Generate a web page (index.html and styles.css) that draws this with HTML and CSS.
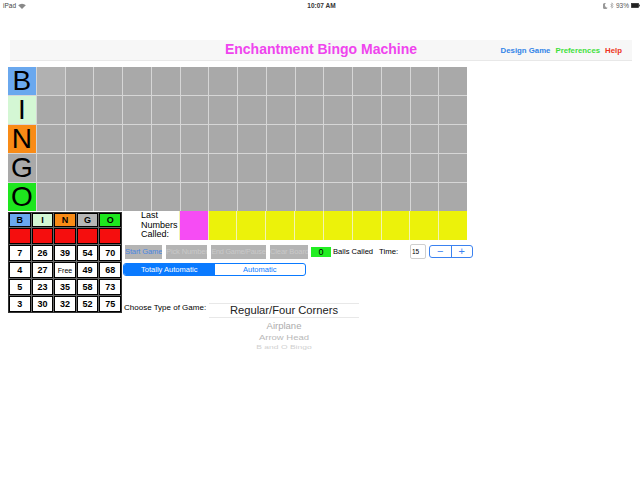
FILE: index.html
```html
<!DOCTYPE html>
<html>
<head>
<meta charset="utf-8">
<link rel="stylesheet" href="styles.css">
</head>
<body>
<div class="status">
  <div class="st-left">iPad
    <svg class="wifi" width="8" height="6" viewBox="0 0 8 6"><path d="M4 6 L0.2 2.2 A5.4 5.4 0 0 1 7.8 2.2 Z" fill="#888"/></svg>
  </div>
  <div class="st-mid">10:07 AM</div>
  <div class="st-right">
    <svg width="5" height="6" viewBox="0 0 5 6"><path d="M3 0.3 A3 3 0 1 0 4.8 4.6 A2.4 2.4 0 0 1 3 0.3 Z" fill="#999"/></svg>
    <svg width="4" height="7" viewBox="0 0 4 7"><path d="M0.5 2 L3.2 4.8 L1.8 6.2 V0.8 L3.2 2.2 L0.5 5" fill="none" stroke="#999" stroke-width="0.6"/></svg>
    <span>93%</span>
    <svg width="9" height="5" viewBox="0 0 9 5"><rect x="0.3" y="0.3" width="7.4" height="4.4" fill="#222" stroke="#222" stroke-width="0.5"/><rect x="7.9" y="1.6" width="0.9" height="1.8" fill="#222"/></svg>
  </div>
</div>

<header class="nav">
  <div></div>
  <h1 class="title">Enchantment Bingo Machine</h1>
  <nav class="links">
    <span class="l-design">Design Game</span>
    <span class="l-prefs">Preferences</span>
    <span class="l-help">Help</span>
  </nav>
</header>

<section class="board">
  <div class="letter lb">B</div>
  <div class="cell hl"></div><div class="cell"></div><div class="cell"></div><div class="cell"></div><div class="cell"></div><div class="cell"></div><div class="cell"></div><div class="cell"></div><div class="cell"></div><div class="cell"></div><div class="cell"></div><div class="cell"></div><div class="cell"></div><div class="cell"></div><div class="cell"></div>
  <div class="letter li">I</div>
  <div class="cell"></div><div class="cell"></div><div class="cell"></div><div class="cell"></div><div class="cell"></div><div class="cell"></div><div class="cell"></div><div class="cell"></div><div class="cell"></div><div class="cell"></div><div class="cell"></div><div class="cell"></div><div class="cell"></div><div class="cell"></div><div class="cell"></div>
  <div class="letter ln">N</div>
  <div class="cell"></div><div class="cell"></div><div class="cell"></div><div class="cell"></div><div class="cell"></div><div class="cell"></div><div class="cell"></div><div class="cell"></div><div class="cell"></div><div class="cell"></div><div class="cell"></div><div class="cell"></div><div class="cell"></div><div class="cell"></div><div class="cell"></div>
  <div class="letter lg">G</div>
  <div class="cell"></div><div class="cell"></div><div class="cell"></div><div class="cell"></div><div class="cell"></div><div class="cell"></div><div class="cell"></div><div class="cell"></div><div class="cell"></div><div class="cell"></div><div class="cell"></div><div class="cell"></div><div class="cell"></div><div class="cell"></div><div class="cell"></div>
  <div class="letter lo">O</div>
  <div class="cell"></div><div class="cell"></div><div class="cell"></div><div class="cell"></div><div class="cell"></div><div class="cell"></div><div class="cell"></div><div class="cell"></div><div class="cell"></div><div class="cell"></div><div class="cell"></div><div class="cell"></div><div class="cell"></div><div class="cell"></div><div class="cell"></div>
</section>

<section class="lower">
  <div class="card">
    <div class="ch cb">B</div><div class="ch ci">I</div><div class="ch cn">N</div><div class="ch cg">G</div><div class="ch co">O</div>
    <div class="cr"></div><div class="cr"></div><div class="cr"></div><div class="cr"></div><div class="cr"></div>
    <div class="num">7</div><div class="num">26</div><div class="num">39</div><div class="num">54</div><div class="num">70</div>
    <div class="num">4</div><div class="num">27</div><div class="num free">Free</div><div class="num">49</div><div class="num">68</div>
    <div class="num">5</div><div class="num">23</div><div class="num">35</div><div class="num">58</div><div class="num">73</div>
    <div class="num">3</div><div class="num">30</div><div class="num">32</div><div class="num">52</div><div class="num">75</div>
  </div>

  <div class="controls">
    <div class="called">
      <div class="called-label">Last<br>Numbers<br>Called:</div>
      <div class="last"></div>
      <div class="prev"></div><div class="prev"></div><div class="prev"></div><div class="prev"></div><div class="prev"></div><div class="prev"></div><div class="prev"></div><div class="prev"></div><div class="prev"></div>
    </div>

    <div class="btnrow">
      <div class="btn b-start active">Start Game</div>
      <div class="btn b-pick">Pick Number</div>
      <div class="btn b-end">End Game/Pause</div>
      <div class="btn b-clear">Clear Board</div>
      <div class="count">0</div>
      <div class="balls">Balls Called</div>
      <div class="time">Time:</div>
      <div class="tinput">15</div>
      <div class="stepper"><span class="minus">−</span><span class="plus">+</span></div>
    </div>

    <div class="seg">
      <div class="seg-item on">Totally Automatic</div>
      <div class="seg-item">Automatic</div>
    </div>

    <div class="choose">
      <div class="choose-label">Choose Type of Game:</div>
      <div class="picker">
        <div class="pk-sel">Regular/Four Corners</div>
        <div class="pk-1">Airplane</div>
        <div class="pk-2">Arrow Head</div>
        <div class="pk-3">B and O Bingo</div>
      </div>
    </div>
  </div>
</section>
</body>
</html>
```

FILE: styles.css
```css
* { box-sizing: border-box; }
html, body { margin: 0; padding: 0; background: #fff; }
body {
  font-family: "Liberation Sans", Arial, sans-serif;
  color: #000;
  width: 643px;
  height: 482px;
  overflow: hidden;
}

/* status bar */
.status {
  height: 11px;
  display: grid;
  grid-template-columns: 1fr auto 1fr;
  align-items: center;
  font-size: 6.5px;
  color: #444;
  padding: 0 3px;
}
.st-left { display: flex; align-items: center; gap: 2px; }
.st-mid { font-weight: bold; color: #333; }
.st-right { display: flex; align-items: center; justify-content: flex-end; gap: 2px; color: #555; }

/* nav bar */
.nav {
  margin: 29px 11px 0 10px;
  height: 21px;
  background: #f7f7f7;
  border-bottom: 1px solid #e8e8e8;
  display: grid;
  grid-template-columns: 1fr auto 1fr;
  align-items: center;
}
.title {
  margin: -3px 0 0 0;
  font-size: 14px;
  font-weight: bold;
  color: #ef44ee;
  line-height: 1;
}
.links {
  justify-self: end;
  display: flex;
  gap: 5px;
  font-size: 7.8px;
  font-weight: bold;
  padding-right: 10px;
}
.l-design { color: #3385e8; }
.l-prefs { color: #3ee03a; }
.l-help { color: #ee3322; }

/* big board */
.board {
  margin: 6px 0 0 8px;
  width: 459px;
  height: 144px;
  display: grid;
  grid-template-columns: repeat(16, 1fr);
  grid-template-rows: repeat(5, 1fr);
  gap: 1px;
  background: #d6d6d6;
}
.cell { background: #a9a9a9; }
.cell.hl { background: #b1b1b1; }
.letter {
  display: flex;
  align-items: center;
  justify-content: center;
  font-size: 28px;
  line-height: 28px;
  color: #000;
}
.lb { background: #6aa8ee; }
.li { background: #d4f7d4; }
.ln { background: #f98b16; }
.lg { background: #a9a9a9; }
.lo { background: #1ee61e; }

/* lower area */
.lower {
  display: flex;
  margin-left: 8px;
  align-items: flex-start;
}
.card {
  margin-top: 1px;
  width: 114px;
  flex-shrink: 0;
  display: grid;
  grid-template-columns: repeat(5, 1fr);
  grid-template-rows: 14px 16px 16px 16px 16px 16px;
  gap: 1px;
  background: #666;
  border: 1px solid #333;
}
.card > div {
  border: 1.5px solid #000;
  display: flex;
  align-items: center;
  justify-content: center;
  font-weight: bold;
  font-size: 9px;
}
.ch { font-size: 9.5px; }
.cb { background: #6aa8ee; }
.ci { background: #d4f7d4; }
.cn { background: #f98b16; }
.cg { background: #b6b6b6; }
.co { background: #1ee61e; }
.cr { background: #f50e0e; }
.num { background: #fff; }
.card > .free { font-weight: normal; font-size: 7px; }

.controls { width: 345px; flex-shrink: 0; }
.called {
  height: 29px;
  display: grid;
  grid-template-columns: repeat(12, 1fr);
  gap: 1px;
  background: #f3f3b0;
}
.called-label {
  grid-column: span 2;
  background: #fff;
  font-size: 9px;
  line-height: 9.6px;
  padding-left: 19px;
  white-space: nowrap;
  display: flex;
  align-items: center;
}
.last { background: #f64cf4; }
.prev { background: #ecf20a; }

.btnrow {
  margin-top: 4px;
  padding-left: 3px;
  display: flex;
  align-items: center;
  height: 15px;
  white-space: nowrap;
}
.btnrow > div { flex-shrink: 0; }
.btn {
  height: 14px;
  background: #b4b4b4;
  color: #c9c9c9;
  font-size: 7.6px;
  letter-spacing: -0.15px;
  line-height: 14px;
  overflow: hidden;
  text-align: center;
  margin-right: 4px;
}
.btn.active { color: #4a86e0; }
.b-start { width: 37px; }
.b-pick { width: 41px; }
.b-end { width: 55px; font-size: 7.3px; letter-spacing: -0.25px; }
.b-clear { width: 38px; margin-right: 3px; }
.count {
  width: 20px;
  height: 10px;
  background: #22ee22;
  font-size: 9px;
  line-height: 10px;
  text-align: center;
}
.balls { margin-left: 2px; font-size: 7.6px; width: 41px; }
.time { margin-left: 5px; font-size: 7.8px; width: 19px; }
.tinput {
  margin-left: 12px;
  width: 16px;
  height: 15px;
  border: 1px solid #cfcfcf;
  border-radius: 2px;
  font-size: 6.5px;
  line-height: 13px;
  padding-left: 1px;
}
.stepper {
  margin-left: 3px;
  width: 44px;
  height: 13px;
  border: 1px solid #3b82f0;
  border-radius: 3px;
  display: flex;
  color: #3b82f0;
  font-size: 11px;
  line-height: 11px;
}
.stepper span { flex: 1; text-align: center; }
.stepper .minus { border-right: 1px solid #3b82f0; }

.seg {
  margin-top: 4px;
  margin-left: 1px;
  width: 183px;
  height: 13px;
  border: 1px solid #0a7aff;
  border-radius: 3px;
  display: flex;
  overflow: hidden;
}
.seg-item {
  flex: 1;
  font-size: 7.5px;
  line-height: 11px;
  text-align: center;
  color: #0a7aff;
}
.seg-item.on { background: #0a7aff; color: #fff; }

.choose {
  margin-top: 27px;
  display: flex;
  align-items: flex-start;
}
.choose-label {
  width: 87px;
  flex-shrink: 0;
  padding-left: 2px;
  font-size: 8px;
  white-space: nowrap;
}
.picker {
  width: 150px;
  height: 48px;
  overflow: hidden;
  text-align: center;
}
.pk-sel {
  height: 15px;
  border-top: 1px solid #e8e8e8;
  border-bottom: 1px solid #e8e8e8;
  font-size: 11.2px;
  line-height: 13px;
  color: #222;
}
.pk-1 {
  margin-top: 1px;
  font-size: 9.5px;
  color: #acacac;
  line-height: 13px;
}
.pk-2 {
  font-size: 9.5px;
  color: #b9b9b9;
  line-height: 11px;
  transform: scaleY(0.85);
}
.pk-3 {
  font-size: 8.5px;
  color: #d0d0d0;
  line-height: 8px;
  transform: scaleY(0.6);
}
```
